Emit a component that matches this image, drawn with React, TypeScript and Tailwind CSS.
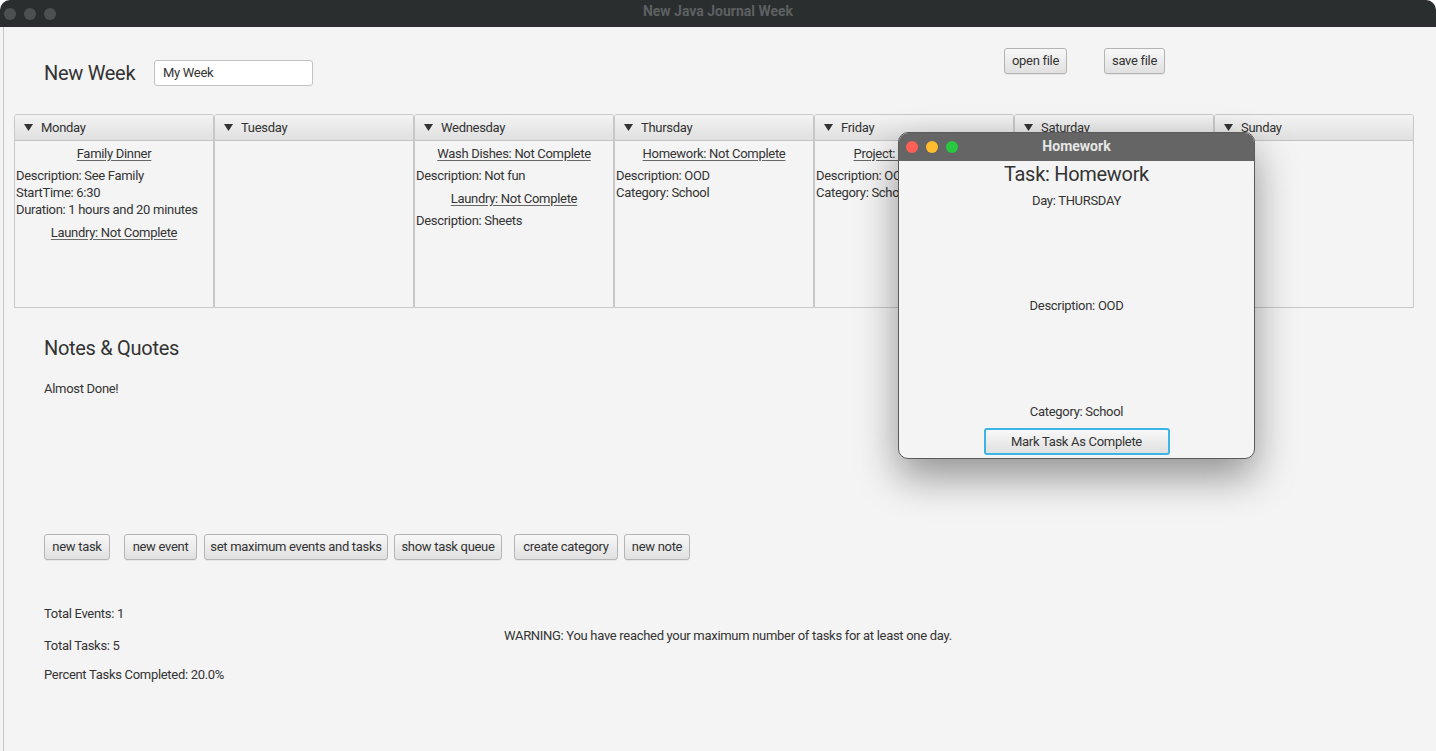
import React from "react";

const Tri = () => (
  <svg width="9" height="7" viewBox="0 0 9 7" className="shrink-0">
    <polygon points="0,0 9,0 4.5,7" fill="#333" />
  </svg>
);

const Link = ({ children }: { children: React.ReactNode }) => (
  <div className="h-[28px] flex items-center justify-center">
    <span className="underline underline-offset-2 decoration-[#666] leading-[17px]">{children}</span>
  </div>
);

const Line = ({ children }: { children: React.ReactNode }) => (
  <div className="leading-[17px] pl-[1px] whitespace-nowrap">{children}</div>
);

const Btn = ({ w, children, cls = "" }: { w: string; children: React.ReactNode; cls?: string }) => (
  <div
    className={`${w} ${cls} h-[26px] shrink-0 flex items-center justify-center rounded-[3px] border border-[#b4b4b4] bg-gradient-to-b from-[#f8f8f8] to-[#e0e0e0] text-[13px] text-[#333] whitespace-nowrap shadow-[0_1px_0_rgba(0,0,0,0.05)]`}
  >
    {children}
  </div>
);

type Day = { name: string; content: React.ReactNode };

const days: Day[] = [
  {
    name: "Monday",
    content: (
      <>
        <Link>Family Dinner</Link>
        <Line>Description: See Family</Line>
        <Line>StartTime: 6:30</Line>
        <Line>Duration: 1 hours and 20 minutes</Line>
        <Link>Laundry: Not Complete</Link>
      </>
    ),
  },
  { name: "Tuesday", content: null },
  {
    name: "Wednesday",
    content: (
      <>
        <Link>Wash Dishes: Not Complete</Link>
        <Line>Description: Not fun</Line>
        <Link>Laundry: Not Complete</Link>
        <Line>Description: Sheets</Line>
      </>
    ),
  },
  {
    name: "Thursday",
    content: (
      <>
        <Link>Homework: Not Complete</Link>
        <Line>Description: OOD</Line>
        <Line>Category: School</Line>
      </>
    ),
  },
  {
    name: "Friday",
    content: (
      <>
        <Link>Project: Not Complete</Link>
        <Line>Description: OOD</Line>
        <Line>Category: School</Line>
      </>
    ),
  },
  { name: "Saturday", content: null },
  { name: "Sunday", content: null },
];

export default function App() {
  return (
    <div className="relative w-[1436px] h-[751px] overflow-hidden bg-white font-['Roboto',sans-serif] text-[#333] tracking-[-0.3px]">
      <div className="flex flex-col w-full h-full rounded-t-[10px] overflow-hidden">
        {/* title bar */}
        <div className="relative h-[27px] shrink-0 bg-[#2a2e2f] flex items-center">
          <div className="flex gap-[8px] pl-[4px]">
            <span className="w-[12px] h-[12px] rounded-full bg-[#4c5051]" />
            <span className="w-[12px] h-[12px] rounded-full bg-[#4c5051]" />
            <span className="w-[12px] h-[12px] rounded-full bg-[#4c5051]" />
          </div>
          <div className="absolute inset-0 flex items-center justify-center pb-[4px] text-[14px] font-bold tracking-normal text-[#5d6162]">
            New Java Journal Week
          </div>
        </div>
        {/* body */}
        <div className="flex flex-1 bg-[#f4f4f4]">
          <div className="w-[3px] shrink-0" />
          <div className="flex-1 border-l border-[#c6c6c6] flex flex-col">
            {/* top row */}
            <div className="flex items-start pt-[21px]">
              <div className="flex items-center mt-[12px] pl-[40px]">
                <div className="w-[110px] text-[20px] leading-[24px]">New Week</div>
                <div className="w-[159px] h-[26px] bg-white border border-[#c2c2c2] rounded-[3px] flex items-center px-[8px] text-[13px]">
                  My Week
                </div>
              </div>
              <div className="ml-auto flex pr-[271px]">
                <Btn w="w-[63px]">open file</Btn>
                <Btn w="w-[61px]" cls="ml-[37px]">save file</Btn>
              </div>
            </div>
            {/* week grid */}
            <div className="ml-[10px] mt-[28px] flex w-[1400px] text-[13px]">
              {days.map((d) => (
                <div
                  key={d.name}
                  className="w-[200px] h-[194px] flex flex-col border border-[#c8c8c8] rounded-t-[3px] overflow-hidden"
                >
                  <div className="h-[26px] shrink-0 flex items-center gap-[8px] pl-[9px] border-b border-[#c4c4c4] bg-gradient-to-b from-[#f3f3f3] to-[#e0e0e0]">
                    <Tri />
                    <span>{d.name}</span>
                  </div>
                  <div className="flex-1 flex flex-col overflow-hidden">
                    <div className="-mt-[2px] flex flex-col">{d.content}</div>
                  </div>
                </div>
              ))}
            </div>
            {/* notes */}
            <div className="pl-[40px] mt-[28px] text-[20px] leading-[24px]">Notes &amp; Quotes</div>
            <div className="pl-[40px] mt-[20px] text-[13px] leading-[17px]">Almost Done!</div>
            {/* buttons */}
            <div className="flex pl-[40px] mt-[137px]">
              <Btn w="w-[66px]">new task</Btn>
              <Btn w="w-[73px]" cls="ml-[14px]">new event</Btn>
              <Btn w="w-[184px]" cls="ml-[7px]">set maximum events and tasks</Btn>
              <Btn w="w-[108px]" cls="ml-[6px]">show task queue</Btn>
              <Btn w="w-[104px]" cls="ml-[12px]">create category</Btn>
              <Btn w="w-[66px]" cls="ml-[6px]">new note</Btn>
            </div>
            {/* stats */}
            <div className="flex mt-[45px] text-[13px] leading-[17px]">
              <div className="w-[500px] pl-[40px] flex flex-col">
                <div>Total Events: 1</div>
                <div className="mt-[15px]">Total Tasks: 5</div>
                <div className="mt-[12px]">Percent Tasks Completed: 20.0%</div>
              </div>
              <div className="mt-[22px]">
                WARNING: You have reached your maximum number of tasks for at least one day.
              </div>
            </div>
          </div>
        </div>
      </div>

      {/* dialog */}
      <div className="absolute left-[898px] top-[132px] w-[357px] h-[327px] flex flex-col rounded-[10px] overflow-hidden border border-[#5a5a5a] shadow-[0_18px_40px_rgba(0,0,0,0.4)] bg-[#f4f4f4]">
        <div className="relative h-[28px] shrink-0 bg-[#656565] flex items-center">
          <div className="flex gap-[8px] pl-[7px]">
            <span className="w-[12px] h-[12px] rounded-full bg-[#fe5f57]" />
            <span className="w-[12px] h-[12px] rounded-full bg-[#febc2e]" />
            <span className="w-[12px] h-[12px] rounded-full bg-[#28c840]" />
          </div>
          <div className="absolute inset-0 flex items-center justify-center pb-[1px] text-[14px] font-bold tracking-normal text-[#e6e6e6]">
            Homework
          </div>
        </div>
        <div className="flex-1 flex flex-col items-center text-[13px] leading-[17px]">
          <div className="mt-[1px] text-[20px] leading-[24px]">Task: Homework</div>
          <div className="mt-[6px]">Day: THURSDAY</div>
          <div className="mt-[88px]">Description: OOD</div>
          <div className="mt-[89px]">Category: School</div>
          <div className="mt-[8px] w-[186px] h-[27px] flex items-center justify-center rounded-[3px] border-2 border-[#3cb4e6] bg-gradient-to-b from-[#f8f8f8] to-[#e0e0e0]">
            Mark Task As Complete
          </div>
        </div>
      </div>
    </div>
  );
}
